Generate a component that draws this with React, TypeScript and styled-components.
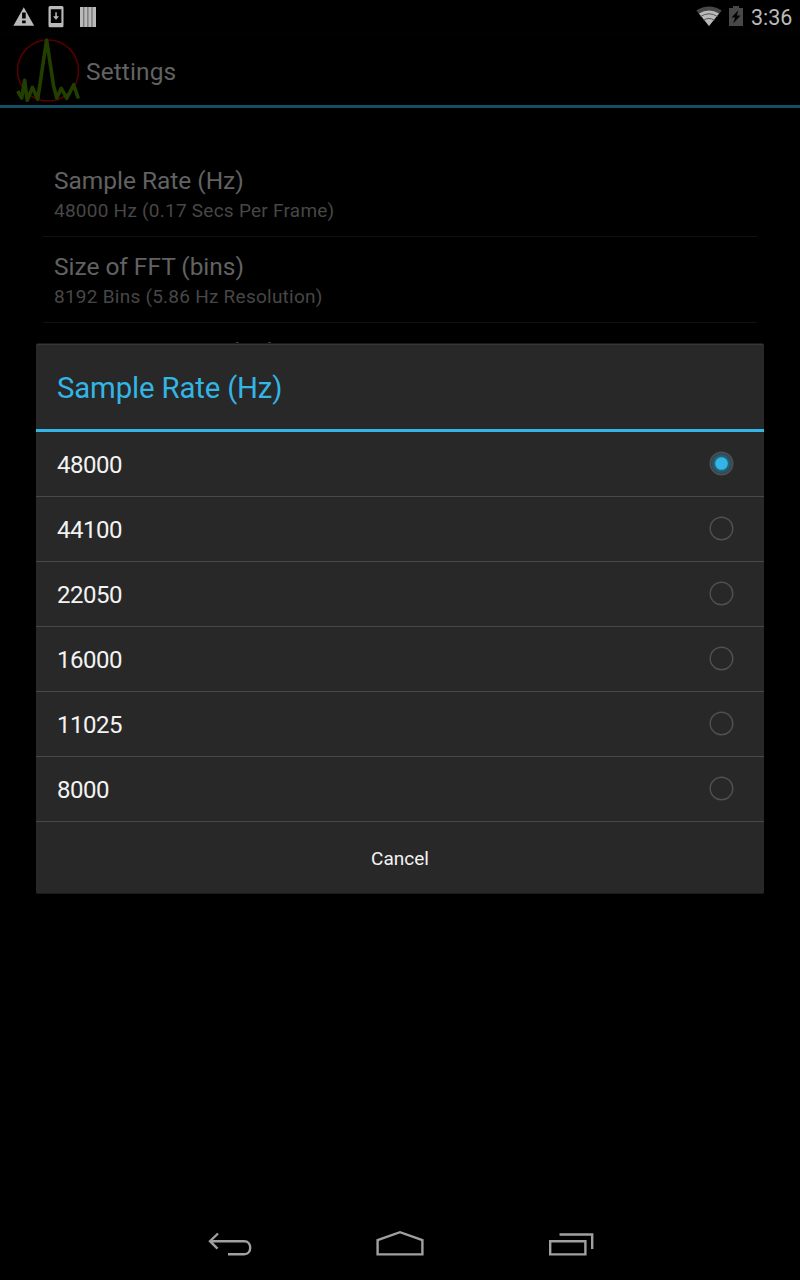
import React from 'react';
import styled, { createGlobalStyle } from 'styled-components';

const GlobalStyle = createGlobalStyle`
  * { box-sizing: border-box; }
  body { margin: 0; background: #000; font-family: Roboto, "Liberation Sans", sans-serif; overflow: hidden; }
`;

const Screen = styled.div`
  position: relative;
  display: flex;
  flex-direction: column;
  width: 800px;
  height: 1280px;
  background: #000;
`;

const StatusBar = styled.div`
  display: flex;
  justify-content: space-between;
  height: 33px;
  padding: 0 8px 0 12px;
`;

const StatusGroup = styled.div`
  display: flex;
  align-items: center;
`;

const Clock = styled.span`
  width: 41px;
  margin-left: 7px;
  padding-top: 2px;
  color: #bababa;
  font-size: 21.5px;
  line-height: 31px;
  white-space: nowrap;
`;

const ActionBar = styled.header`
  display: flex;
  align-items: center;
  height: 75px;
  padding-left: 16px;
  border-top: 1px solid #030303;
  border-bottom: 3px solid #154f64;
`;

const ActionTitle = styled.h1`
  margin: 4px 0 0 6px;
  color: #626262;
  font-size: 24.5px;
  font-weight: 400;
  line-height: 30px;
  letter-spacing: 0.1px;
`;

const Preferences = styled.main`
  flex: 1;
  padding: 43px 43px 0;
`;

const Preference = styled.section`
  height: 86px;
  padding: 15px 11px 0;
  border-bottom: 1px solid #111;
`;

const PreferenceTitle = styled.div`
  color: #626262;
  font-size: 24.5px;
  line-height: 30px;
  letter-spacing: -0.03px;
`;

const PreferenceSummary = styled.div`
  margin-top: 3px;
  color: #474747;
  font-size: 19px;
  line-height: 24px;
  letter-spacing: 0.25px;
`;

const Dialog = styled.div`
  position: absolute;
  top: 344px;
  left: 36px;
  width: 728px;
  height: 550px;
  background: #282828;
  border-radius: 2px;
  box-shadow: inset 0 1px #373737, inset 0 -1px #1c1c1c, 0 -1px #1a1a1a;
`;

const DialogTitle = styled.h2`
  height: 88px;
  margin: 0;
  padding: 25px 21px 0;
  border-bottom: 3px solid #33b5e5;
  color: #33b5e5;
  font-size: 29.33px;
  font-weight: 400;
  line-height: 38px;
  letter-spacing: -0.15px;
`;

const Choice = styled.div`
  display: flex;
  align-items: center;
  justify-content: space-between;
  height: 65px;
  padding: 0 28px 0 21px;
  border-bottom: 1px solid #484848;
  color: #f3f3f3;
  font-size: 24px;
`;

const ChoiceLabel = styled.span`
  padding-top: 2px;
  line-height: 30px;
  letter-spacing: -0.48px;
`;

const CancelButton = styled.button`
  display: block;
  width: 100%;
  height: 72px;
  padding: 0;
  border: 0;
  background: none;
  color: #f3f3f3;
  font: 400 19px Roboto, "Liberation Sans", sans-serif;
`;

const NavigationBar = styled.nav`
  display: flex;
  justify-content: center;
  height: 64px;
  gap: 106px;
`;

const Radio = ({ checked }: { checked: boolean }) => (
  <svg width="27" height="27" viewBox="0 0 27 27">
    <defs>
      <radialGradient id="halo">
        <stop offset="0.5" stopColor="#246f8a" />
        <stop offset="1" stopColor="#2b414a" />
      </radialGradient>
    </defs>
    <circle cx="12.5" cy="12.5" r="11.3" fill={checked ? 'url(#halo)' : 'none'} stroke="#505050" strokeWidth="1.4" />
    {checked && <circle cx="12.5" cy="12.5" r="6.3" fill="#33b5e5" />}
  </svg>
);

const NotificationIcons = () => (
  <svg width="90" height="33" viewBox="12 0 90 33">
    <path d="M23.8 7.3 34.2 25.7H13.4Z" fill="#bababa" />
    <path d="M22.1 12.5h3.6v6h-3.6zm0 8h3.6v2.8h-3.6z" fill="#000" />
    <path fillRule="evenodd" d="M50 6h12q1.5 0 1.5 1.5v18.2q0 1.5-1.5 1.5H50q-1.5 0-1.5-1.5V7.5Q48.500 6 50 6Zm.8 3.300v13.700h10.600V9.300Z" fill="#bababa" />
    <path d="M55.300 12.300h1.500v4h2.200l-3 3.500-3-3.500h2.300z" fill="#bababa" />
    <path d="M80 7h16v20H80z" fill="#bababa" />
    <path d="M83.800 7v20M87.900 7v20M92 7v20" stroke="#606060" strokeWidth="1" />
  </svg>
);

const SignalIcons = () => (
  <svg width="50" height="33" viewBox="694 0 50 33">
    <path d="M709 26 696.300 10.500Q709 2.500 721.700 10.500Z" fill="#484848" />
    <path d="M709 26 699 13.600Q709 7.200 719 13.600Z" fill="#bababa" />
    <path d="M700.500 16.600Q709 10.900 717.500 16.600M703.600 20.200Q709 16.700 714.400 20.200" stroke="#555" strokeWidth="1" fill="none" />
    <path d="M729 8h4V6h6v2h4v18h-14z" fill="#484848" />
    <path d="m738.500 10-7 7.400h3.600l-2 6 7.500-8h-3.700z" fill="#050505" />
  </svg>
);

const AppLogo = () => (
  <svg width="64" height="64" viewBox="16 38 64 64">
    <circle cx="48" cy="70.500" r="30.500" fill="none" stroke="#540000" strokeWidth="1.6" />
    <path d="m17.700 91 4 7 2.900-17.700 2.600 20 5.200-13 5.300 12L46.600 40l7 46 3.200 12 4.500-9.700 5.500 10 6.900-13.600L78.300 98.500" fill="none" stroke="#223f00" strokeWidth="3.600" strokeLinejoin="round" />
  </svg>
);

const BackIcon = () => (
  <svg width="64" height="64" viewBox="198 1216 64 64" fill="none" stroke="#a0a0a0" strokeWidth="2.400">
    <path d="M210 1241.200h34.200c8 0 8 13 0 13H228M218 1233.500l-8 7.700 7.500 7.500" />
  </svg>
);

const HomeIcon = () => (
  <svg width="64" height="64" viewBox="368 1216 64 64" fill="none" stroke="#a0a0a0" strokeWidth="2.400">
    <path d="M377.600 1254.400V1240l22.400-7.800 22.400 7.800v14.400Z" />
  </svg>
);

const RecentsIcon = () => (
  <svg width="64" height="64" viewBox="538 1216 64 64" fill="none" stroke="#a0a0a0" strokeWidth="2.400">
    <path d="M550.200 1241.200h35.200v13.200h-35.200zM559.500 1234.500h32.700v14.500" />
  </svg>
);

const preferences = [
  ['Sample Rate (Hz)', '48000 Hz (0.17 Secs Per Frame)'],
  ['Size of FFT (bins)', '8192 Bins (5.86 Hz Resolution)'],
  ['Filter Set Shape (Hz)', ''],
];

const rates = ['48000', '44100', '22050', '16000', '11025', '8000'];

export default function App() {
  return (
    <Screen>
      <GlobalStyle />
      <StatusBar>
        <StatusGroup><NotificationIcons /></StatusGroup>
        <StatusGroup><SignalIcons /><Clock>3:36</Clock></StatusGroup>
      </StatusBar>
      <ActionBar>
        <AppLogo />
        <ActionTitle>Settings</ActionTitle>
      </ActionBar>
      <Preferences>
        {preferences.map(([title, summary]) => (
          <Preference key={title}>
            <PreferenceTitle>{title}</PreferenceTitle>
            <PreferenceSummary>{summary}</PreferenceSummary>
          </Preference>
        ))}
      </Preferences>
      <NavigationBar>
        <BackIcon />
        <HomeIcon />
        <RecentsIcon />
      </NavigationBar>
      <Dialog role="dialog">
        <DialogTitle>Sample Rate (Hz)</DialogTitle>
        {rates.map((rate, i) => (
          <Choice key={rate}>
            <ChoiceLabel>{rate}</ChoiceLabel>
            <Radio checked={i === 0} />
          </Choice>
        ))}
        <CancelButton>Cancel</CancelButton>
      </Dialog>
    </Screen>
  );
}
